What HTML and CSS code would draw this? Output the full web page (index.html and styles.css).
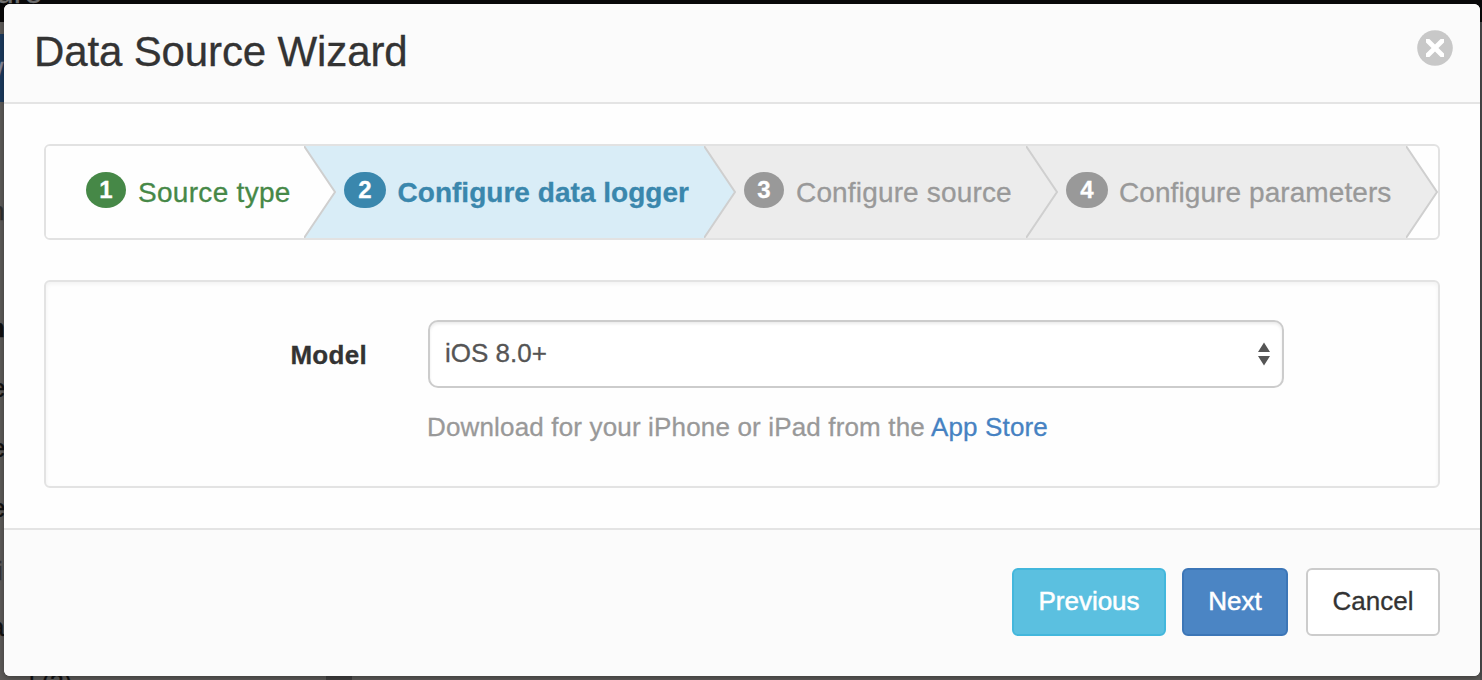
FILE: index.html
```
<!DOCTYPE html>
<html lang="en">
<head>
<meta charset="utf-8">
<title>Data Source Wizard</title>
<link rel="stylesheet" href="styles.css">
</head>
<body>
<div class="backdrop" aria-hidden="true">
  <div class="backdrop-bar"></div>
  <div class="backdrop-tab"></div>
  <span class="peek peek-brand">ure</span>
  <span class="peek peek-w">W</span>
  <span class="peek peek-n">n</span>
  <span class="peek peek-n2">n</span>
  <span class="peek peek-e1">e</span>
  <span class="peek peek-e2">e</span>
  <span class="peek peek-e3">e</span>
  <span class="peek peek-i">i</span>
  <span class="peek peek-a">a</span>
  <span class="peek peek-count">l (2)</span>
  <div class="backdrop-scroll"></div>
  <div class="backdrop-mark"></div>
</div>
<main class="modal" role="dialog">
  <header class="modal-header">
    <h1 class="title">Data Source Wizard</h1>
    <button class="close" aria-label="Close">
      <svg width="36" height="36" viewBox="0 0 36 36"><circle cx="18" cy="18" r="17.8" fill="#c8c8c8"/><path d="M9 9H12.4L18 14.6L23.6 9H27V12.4L21.4 18L27 23.6V27H23.6L18 21.4L12.4 27H9V23.6L14.6 18L9 12.4Z" fill="#fff"/></svg>
    </button>
  </header>
  <section class="modal-body">
    <ol class="steps">
      <li class="step step-1 complete"><span class="badge">1</span><span class="label">Source type</span>
        <svg class="chevron" width="33" height="92" viewBox="0 0 33 92"><path class="fill" d="M0 0L31 46L0 92Z"/><path class="edge" d="M0 0L31 46L0 92"/></svg></li>
      <li class="step step-2 active"><span class="badge">2</span><span class="label">Configure data logger</span>
        <svg class="chevron" width="33" height="92" viewBox="0 0 33 92"><path class="fill" d="M0 0L31 46L0 92Z"/><path class="edge" d="M0 0L31 46L0 92"/></svg></li>
      <li class="step step-3"><span class="badge">3</span><span class="label">Configure source</span>
        <svg class="chevron" width="33" height="92" viewBox="0 0 33 92"><path class="fill" d="M0 0L31 46L0 92Z"/><path class="edge" d="M0 0L31 46L0 92"/></svg></li>
      <li class="step step-4"><span class="badge">4</span><span class="label">Configure parameters</span>
        <svg class="chevron" width="33" height="92" viewBox="0 0 33 92"><path class="fill" d="M0 0L31 46L0 92Z"/><path class="edge" d="M0 0L31 46L0 92"/></svg></li>
    </ol>
    <div class="panel">
      <div class="field-label">Model</div>
      <div class="field">
        <div class="select"><span class="value">iOS 8.0+</span>
          <svg width="12" height="24" viewBox="0 0 12 24"><path d="M6 .5L12 10H0ZM0 14H12L6 23.5Z" fill="#555"/></svg>
        </div>
        <p class="help"><span class="help-text">Download for your iPhone or iPad from the</span> <a class="link" href="#">App Store</a></p>
      </div>
    </div>
  </section>
  <footer class="modal-footer">
    <button class="btn btn-info">Previous</button>
    <button class="btn btn-primary">Next</button>
    <button class="btn btn-default">Cancel</button>
  </footer>
</main>
</body>
</html>
```
FILE: styles.css
```
* { box-sizing: border-box; }
body {
  margin: 0;
  width: 1482px;
  height: 680px;
  padding: 4px 2px 4px 4px;
  position: relative;
  overflow: hidden;
  background: #5e5c5a;
  font: 26px/36px "Liberation Sans", Arial, sans-serif;
  color: #333;
  -webkit-text-stroke: .3px;
}
.backdrop { position: absolute; inset: 0; overflow: hidden; }
.backdrop-bar { position: absolute; inset: 0 0 auto; height: 22px; background: #09090a; }
.backdrop-tab { position: absolute; left: 0; top: 34px; width: 4px; height: 68px; background: #1c3a5e; }
.backdrop-scroll { position: absolute; right: 0; top: 22px; width: 2px; bottom: 0; background: #4c4c4d; }
.backdrop-mark { position: absolute; left: 326px; top: 676px; width: 26px; height: 4px; background: #424040; }
.peek { position: absolute; line-height: 30px; color: #111; }
.peek-brand { left: -4px; top: -23px; font-size: 32px; color: #707070; }
.peek-w { left: -21px; top: 56px; color: #889; }
.peek-n { left: -10px; top: 196px; color: #302f2e; }
.peek-n2 { left: -11px; top: 313px; font-weight: bold; }
.peek-e1 { left: -9px; top: 373px; }
.peek-e2 { left: -9px; top: 433px; }
.peek-e3 { left: -9px; top: 493px; }
.peek-i { left: -3px; top: 556px; color: #343332; }
.peek-a { left: -10px; top: 612px; }
.peek-count { left: 29px; top: 668px; font-size: 25px; }

.modal {
  position: relative;
  width: 1476px;
  height: 672px;
  border-radius: 6px;
  overflow: hidden;
  display: flex;
  flex-direction: column;
  background: #fefefe;
  box-shadow: 0 2px 6px rgba(0, 0, 0, .35);
}
.modal-header {
  height: 100px;
  padding: 0 27px 12px 30px;
  display: flex;
  justify-content: space-between;
  align-items: center;
  background: #fbfbfb;
  border-bottom: 2px solid #e4e4e4;
}
.title { margin: 10px 0 0; font-size: 42px; line-height: 48px; font-weight: normal; letter-spacing: -.13px; white-space: nowrap; }
.close { padding: 0; border: 0; background: none; width: 36px; height: 36px; margin-top: 2px; }
.close svg { display: block; }

.modal-body { flex: 1; padding: 40px; display: flex; flex-direction: column; gap: 40px; }
.steps {
  margin: 0;
  padding: 0;
  list-style: none;
  height: 96px;
  display: flex;
  border: 2px solid #e2e2e2;
  border-radius: 6px;
}
.step {
  --tone: #ececec;
  position: relative;
  display: flex;
  align-items: center;
  padding-left: 40px;
  gap: 12px;
  font-size: 28px;
  letter-spacing: .16px;
  color: #999;
  background: var(--tone);
  white-space: nowrap;
}
.complete { --tone: #fefefe; color: #468847; letter-spacing: .3px; border-radius: 4px 0 0 4px; }
.active { --tone: #d9edf7; color: #3a87ad; font-weight: bold; letter-spacing: .03px; }
.step-1 { width: 258px; }
.step-2 { width: 400px; gap: 11.5px; }
.step-3 { width: 322px; }
.step-4 { width: 380px; gap: 11px; letter-spacing: .08px; }
.label { margin-top: 2px; }
.badge {
  width: 40px;
  height: 36px;
  margin-bottom: 4px;
  border-radius: 20px / 18px;
  background: #999;
  color: #fff;
  text-align: center;
  font-size: 24px;
  font-weight: bold;
  letter-spacing: 0;
  line-height: 35px;
}
.complete .badge { background: #468847; }
.active .badge { background: #3a87ad; }
.step-2 .badge, .step-4 .badge { width: 42px; }
.chevron { position: absolute; left: 100%; top: 0; z-index: 1; }
.chevron .fill { fill: var(--tone); }
.chevron .edge { fill: none; stroke: #cfcfcf; stroke-width: 2; }

.panel {
  height: 208px;
  padding: 38px 0 0;
  display: flex;
  gap: 61px;
  border: 2px solid #e3e3e3;
  border-radius: 6px;
  box-shadow: inset 0 2px 4px rgba(0, 0, 0, .05);
}
.field-label { width: 321px; padding-top: 17px; text-align: right; font-weight: bold; letter-spacing: .3px; }
.field { width: 856px; }
.select {
  height: 68px;
  padding: 0 12px 0 15px;
  display: flex;
  align-items: center;
  justify-content: space-between;
  border: 2px solid #ccc;
  border-radius: 10px;
  color: #555;
  background: #fff;
  box-shadow: inset 0 2px 3px rgba(0, 0, 0, .08);
}
.value { margin-bottom: 2px; }
.help { margin: 21px 0 0 -1px; color: #999; letter-spacing: .16px; white-space: nowrap; }
.link { color: #4682c2; text-decoration: none; }

.modal-footer {
  height: 148px;
  padding: 38px 40px 0;
  display: flex;
  justify-content: flex-end;
  background: #fbfbfb;
  border-top: 2px solid #e4e4e4;
}
.btn {
  height: 68px;
  padding: 0 0 2px;
  border: 2px solid;
  border-radius: 6px;
  font: inherit;
  color: #fff;
  white-space: nowrap;
}
.btn-info { width: 154px; background: #5bc0e0; border-color: #43b7dc; }
.btn-primary { width: 106px; margin-left: 16px; background: #4b85c4; border-color: #3c76b7; }
.btn-default { width: 134px; margin-left: 18px; background: #fff; border-color: #ccc; color: #333; }
.btn-info, .btn-primary { -webkit-text-stroke: .5px; }
```
